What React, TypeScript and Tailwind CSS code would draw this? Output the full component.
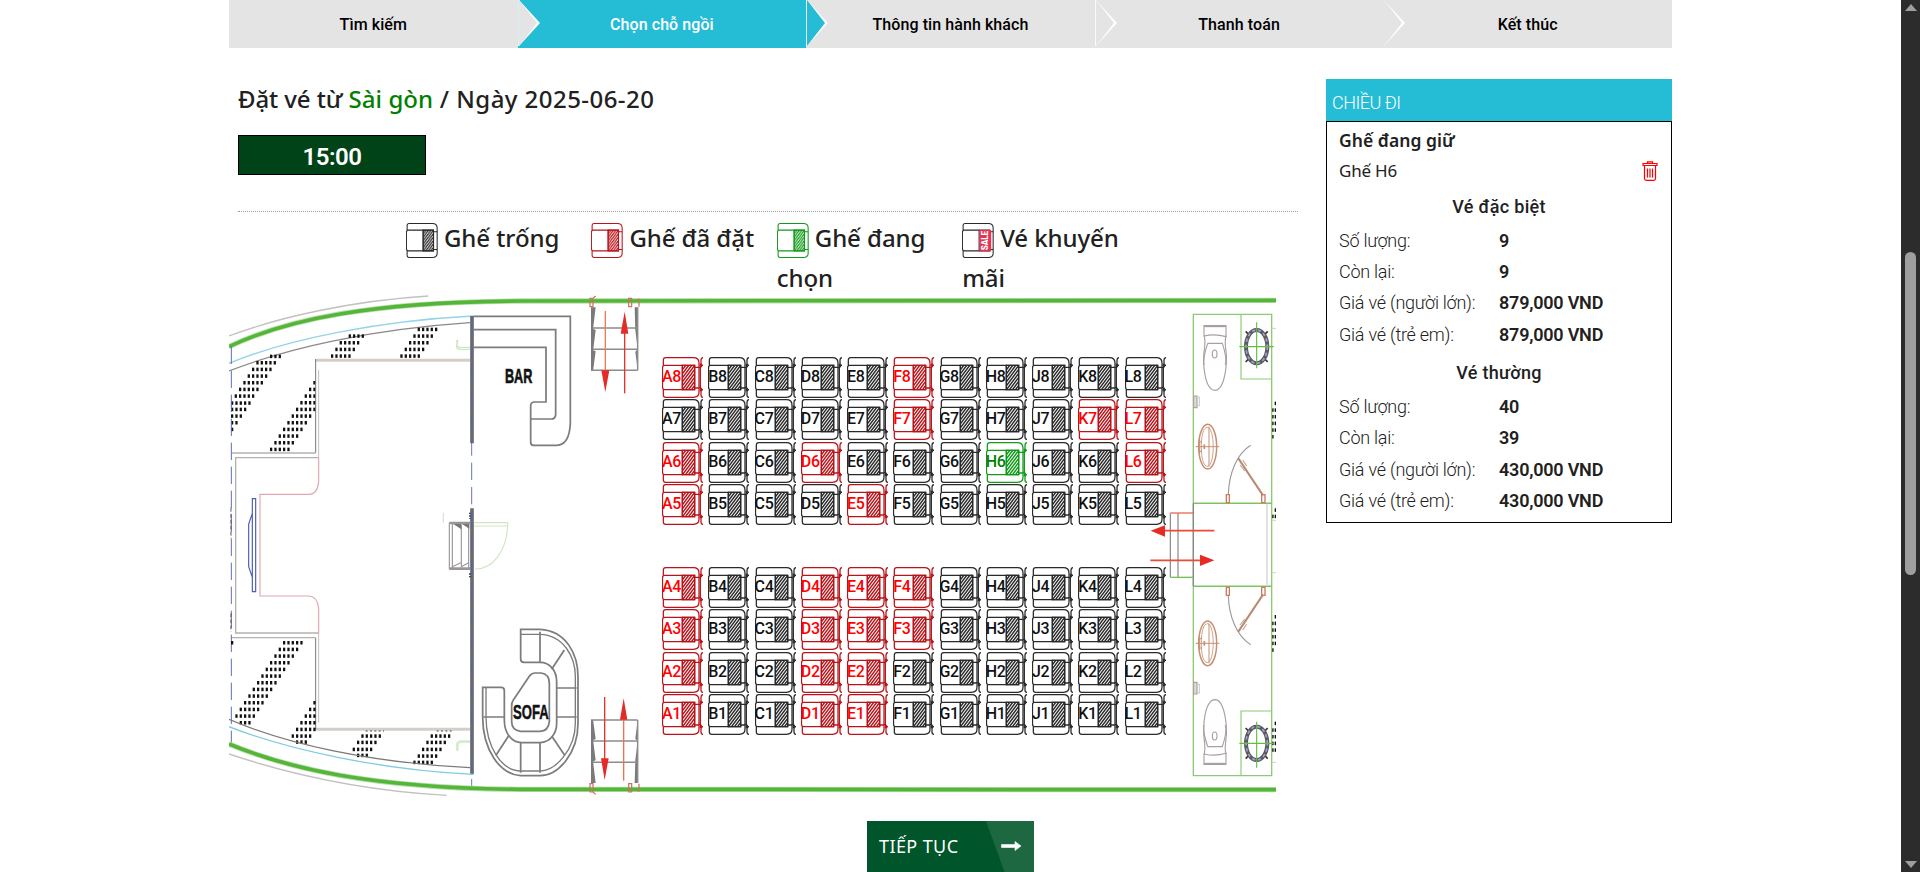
import React from "react";

const STEPS = ["Tìm kiếm", "Chọn chỗ ngồi", "Thông tin hành khách", "Thanh toán", "Kết thúc"];
const COLS = ["A", "B", "C", "D", "E", "F", "G", "H", "J", "K", "L"];
const BOOKED = new Set([
  "A8", "F8", "F7", "K7", "L7", "A6", "D6", "L6", "A5", "E5",
  "A4", "D4", "E4", "F4", "A3", "D3", "E3", "F3", "A2", "D2", "E2", "A1", "D1", "E1",
]);
const HELD = new Set(["H6"]);

type Kind = "free" | "booked" | "held" | "sale";
const LINE: Record<Kind, string> = { free: "#2a2a2a", booked: "#b8141a", held: "#109a18", sale: "#2a2a2a" };
const TEXT: Record<Kind, string> = {
  free: "text-[#111]",
  booked: "text-[#ff0000]",
  held: "text-[#008000]",
  sale: "text-[#111]",
};

function HatchDefs() {
  return (
    <svg className="absolute h-0 w-0" aria-hidden="true">
      <defs>
        {(["free", "booked", "held"] as Kind[]).map((k) => (
          <pattern key={k} id={`hatch-${k}`} width="9" height="12" patternUnits="userSpaceOnUse">
            <path d="M-2.25 15L11.25 -3M-2.25 3L2.25 -3M6.75 15L11.25 9" stroke={LINE[k]} strokeWidth="4.3" />
          </pattern>
        ))}
      </defs>
    </svg>
  );
}

function SeatIcon({ kind, legend = false }: { kind: Kind; legend?: boolean }) {
  const c = LINE[kind];
  return (
    <svg
      className={legend ? "inline-block h-[35px] w-8 align-middle" : "absolute inset-0 h-[41px] w-[41px]"}
      viewBox={legend ? "0 0 114 123" : "0 0 123 123"}
      preserveAspectRatio="none"
      fill="none"
      stroke={c}
      strokeWidth="3.8"
    >
      <path d="M4 25V9Q4 2 11 2H94Q111 2 111 18V106Q111 121 94 121H11Q4 121 4 114V98" fill="#fff" />
      <path d="M97 31H111M97 93H111" />
      <path d="M7 25Q1.5 25 1.5 33V90Q1.5 98 7 98H61V25Z" fill="#fff" />
      <path d="M61 25H98V98H61" />
      {kind === "sale" ? (
        <>
          <rect x="62" y="24" width="42" height="76" fill="#e5344f" stroke="none" />
          <text
            transform="rotate(-90 83 62)"
            x="83" y="73" textAnchor="middle" fill="#fff" stroke="none"
            fontSize="29" fontWeight="900" fontFamily="Roboto, sans-serif"
            textLength="68" lengthAdjust="spacingAndGlyphs"
          >
            SALE
          </text>
        </>
      ) : (
        <rect x="61" y="25" width="37" height="73" fill={`url(#hatch-${kind})`} />
      )}
      {!legend && (
        <path d="M115 20V103M123 2Q117 3 117 10V19Q117 25 123 25M123 98Q117 98 117 105V114Q117 121 123 121M111 32Q120 32 119 23M111 91Q120 91 119 100" />
      )}
    </svg>
  );
}

function Seat({ id }: { id: string }) {
  const kind: Kind = HELD.has(id) ? "held" : BOOKED.has(id) ? "booked" : "free";
  return (
    <button className="relative h-[41px] w-[41px] text-left">
      <SeatIcon kind={kind} />
      <span className={`absolute top-[8px] left-0 text-[16px] leading-6 font-medium tracking-[-0.3px] ${TEXT[kind]}`}>{id}</span>
    </button>
  );
}

function SeatBlock({ rows, className }: { rows: number[]; className: string }) {
  return (
    <div className={`absolute left-[433px] grid grid-cols-[repeat(11,46.25px)] auto-rows-[42.3px] ${className}`}>
      {rows.flatMap((r) => COLS.map((c) => <Seat key={c + r} id={c + r} />))}
    </div>
  );
}

/* [row y, first dot x, number of dots] */
type DotRow = [number, number, number];
const TOP_DOTS: DotRow[] = [
  [229, 153, 3], [248, 112, 5], [268, 99, 5], [288, 86, 5], [308, 73, 5], [328, 60, 5], [348, 47, 5],
  [369, 36, 5], [388, 36, 4], [408, 36, 3], [428, 36, 2], [448, 36, 1],
  [308, 283, 1], [328, 270, 2], [348, 257, 3], [368, 244, 4], [388, 231, 5], [408, 218, 5], [428, 205, 5],
  [448, 192, 5], [468, 179, 5], [488, 166, 5], [508, 153, 5],
  [168, 389, 4], [188, 362, 5], [208, 349, 5], [228, 336, 5],
  [148, 596, 5], [168, 583, 5], [188, 570, 5], [208, 557, 5], [228, 544, 5],
];
const BOTTOM_DOTS: DotRow[] = [
  [308, 36, 1], [308, 192, 5], [328, 179, 5], [348, 166, 5], [368, 153, 5], [388, 140, 5], [408, 127, 5],
  [428, 114, 5], [448, 101, 5], [468, 88, 5], [488, 75, 5], [508, 62, 5], [528, 49, 5], [548, 62, 3],
  [488, 283, 1], [508, 270, 2], [528, 257, 3], [548, 244, 4], [568, 231, 5], [588, 218, 5], [606, 231, 3],
  [588, 427, 5], [607, 414, 5], [628, 401, 5], [646, 414, 3],
  [588, 635, 5], [607, 622, 5], [628, 609, 5], [648, 596, 5], [667, 583, 5],
];
const SIDE_DOTS: DotRow[] = [
  [340, 527, 1], [360, 517, 2], [380, 517, 2], [400, 517, 2], [420, 517, 2], [440, 517, 1],
  [660, 527, 1], [679, 517, 2],
  [980, 527, 1], [1000, 517, 2], [1020, 517, 2], [1040, 517, 2], [1060, 517, 2], [1080, 517, 1],
  [1300, 527, 1], [1320, 517, 2], [1340, 517, 2], [1360, 517, 2], [1380, 517, 2],
];

function Dots({ rows, step = 13 }: { rows: DotRow[]; step?: number }) {
  return (
    <g fill="#111" stroke="none">
      {rows.flatMap(([y, x, n]) =>
        Array.from({ length: n }, (_, i) => (
          <rect key={`${y}-${x}-${i}`} x={x + i * step - 3} y={y - 5} width="6.8" height="10.5" />
        ))
      )}
    </g>
  );
}

function Restroom() {
  return (
    <g fill="none" strokeWidth="3.4">
      <g stroke="#a8a0a0">
        <path d="M312 107H378V140Q345 130 312 138Z" />
        <path d="M313 109H377" strokeWidth="5" />
        <path d="M313 138Q316 150 314 170C306 220 314 300 345 301C374 300 384 220 377 175Q374 150 378 138" />
        <path d="M323 160H367Q382 205 376 225M323 160Q308 205 312 225" />
        <ellipse cx="344" cy="192" rx="7" ry="12" />
        <path d="M281 318H291V353H281Z" fill="#ddd" />
        <path d="M291 321H298V347H291" stroke="#ccc" />
      </g>
      <g stroke="#c58f74">
        <ellipse cx="323" cy="470" rx="27" ry="67" strokeWidth="4.5" />
        <path d="M322 412C345 412 346 528 322 529C310 528 304 505 304 470S310 413 322 412Z" strokeWidth="2.5" />
        <path d="M287 470H358M327 410V530M296 456H306M296 484H306M299 450V490" strokeWidth="3" />
        <path d="M313 463V477" strokeWidth="5" />
      </g>
      <path d="M385 613C387 550 410 492 452 466" stroke="#999" />
      <path d="M415 505L489 616" stroke="#b88a70" strokeWidth="6" />
      <path d="M428 510L440 528M420 525L434 543" stroke="#c9a48f" />
      <path d="M379 614H388V638H379ZM485 614H495V638H485Z" stroke="#cc7a62" strokeWidth="4" />
      <path d="M423 73V267H515" stroke="#8ccb74" strokeWidth="3.5" />
      <path d="M437 124L450 138M503 124L490 138M437 216L450 202M503 216L490 202" stroke="#333" strokeWidth="5" />
      <ellipse cx="470" cy="170" rx="32" ry="50" stroke="#5a5a60" strokeWidth="12" />
      <ellipse cx="470" cy="170" rx="32" ry="50" stroke="#9aa3cc" strokeWidth="5" strokeDasharray="10 8" />
      <path d="M470 97V235M418 170H521" stroke="#62bb46" />
    </g>
  );
}

function Stairs() {
  return (
    <g>
      <path d="M453 82H467L460 140V147L467 150L460 206V211L467 214L460 266V271H453Z" fill="#7a7a7a" stroke="none" />
      <path d="M584 82H593V271L586 215L593 208L586 150Z" fill="#7a7a7a" stroke="none" />
      <path d="M458 144H593M458 208H593M453 271H593M593 82V271" stroke="#8c8c8c" strokeWidth="4.5" />
      <path d="M450 55H459V80H450ZM459 55L467 48M566 55H575V80H566ZM592 58H597V80" stroke="#c97358" strokeWidth="3.6" />
    </g>
  );
}

function DeckPlan() {
  return (
    <svg className="absolute inset-0 h-[506px] w-[1047px]" viewBox="229 290 1047 506" fill="none">
      <g transform="translate(220 280) scale(.33333)">
        <path d="M27 168C180 110 400 62 625 48" stroke="#c4c0c0" strokeWidth="4" />
        <path d="M27 200C200 118 450 66 900 63L3170 61" stroke="#b9e0aa" strokeWidth="16" />
        <path d="M27 200C200 118 450 66 900 63L3170 61" stroke="#55b53a" strokeWidth="11" />
        <path d="M27 250C200 178 480 122 760 108" stroke="#93d4e6" strokeWidth="4" />
        <path d="M27 273C200 205 450 148 750 128" stroke="#8d8888" strokeWidth="3.5" />
        <Dots rows={TOP_DOTS} />
        <path d="M287 241H750M287 1348H750" stroke="#d3cec9" strokeWidth="9" />
        <path d="M287 237V519M287 1073V1348" stroke="#777" strokeWidth="3" />
        <path d="M296 270V533M296 1059V1328" stroke="#c2bebe" strokeWidth="3" />
        <path d="M34 519H287M34 1073H287M296 533H47V1059H296" stroke="#b5b1b1" strokeWidth="4" />
        <path d="M296 533V605Q292 643 268 643H120V948H268Q292 950 296 985V1059" stroke="#e0a8ae" strokeWidth="3.5" />
        <path d="M97 656H107V935H97ZM97 700L86 732V860L97 892" stroke="#4c5db4" strokeWidth="3.5" />
        <path d="M34 200V1390" stroke="#5f6cb8" strokeWidth="3" strokeDasharray="52 20" />
        <path d="M33 683V775M33 1000V1055" stroke="#555" strokeWidth="3" strokeDasharray="12 6" />
        <path d="M756 108V490M756 685V1483" stroke="#6b6b6e" strokeWidth="11" />
        <path d="M755 110V1530" stroke="#5163b4" strokeWidth="2.6" strokeDasharray="52 21" />
        <path d="M708 183Q716 178 712 190Q704 208 722 208H750M712 185Q705 200 722 202H750" stroke="#cfe6c4" strokeWidth="4" />
        <path d="M712 1412V1395Q712 1385 724 1385H750" stroke="#d5eccb" strokeWidth="8" />
        <g stroke="#9a9696" strokeWidth="3.4">
          <path d="M688 728V868M697 728V868M724 735V862M746 738V868" />
          <path d="M688 729H750M688 866H750" strokeWidth="8" />
          <path d="M697 860L722 848M724 860L746 848" />
          <path d="M700 732H724V748ZM726 732H748V746Z" fill="#777" stroke="none" />
          <path d="M750 698V716M750 880V895" stroke="#444" strokeWidth="6" strokeDasharray="4 4" />
          <path d="M670 698V728" stroke="#ddd" />
        </g>
        <path d="M762 728H863V738H762M863 738C860 810 820 868 765 867" stroke="#cfe6c4" strokeWidth="3.5" />
      </g>
      <g transform="translate(220 540) scale(.33333)">
        <Dots rows={BOTTOM_DOTS} />
        <path d="M437 573H492M650 573H702" stroke="#444" strokeWidth="3" strokeDasharray="6 7" />
        <path d="M27 538C200 612 450 668 750 683" stroke="#7d7878" strokeWidth="3.5" />
        <path d="M27 560C200 628 480 690 760 703" stroke="#7fcbe0" strokeWidth="4" />
        <path d="M27 612C200 684 450 745 900 748L3170 749" stroke="#b9e0aa" strokeWidth="16" />
        <path d="M27 612C200 684 450 745 900 748L3170 749" stroke="#55b53a" strokeWidth="11" />
        <path d="M27 642C200 700 430 752 680 766" stroke="#c4c0c0" strokeWidth="4" />
      </g>
      <g transform="translate(440 280) scale(.33333)">
        <g stroke="#7c7c7c" strokeWidth="5.2">
          <path d="M100 109H391V430Q388 496 350 496H280Q272 496 272 486V378Q272 366 284 366H318V202H100" />
          <path d="M100 149H347V405Q345 417 335 417H272" />
        </g>
        <text x="195" y="310" fill="#111" stroke="#111" strokeWidth="2" fontSize="63" fontWeight="700" fontFamily="Liberation Sans, sans-serif" textLength="82" lengthAdjust="spacingAndGlyphs">BAR</text>
        <Stairs />
        <path d="M496 93V275" stroke="#f07a55" strokeWidth="4" />
        <path d="M554 150V340" stroke="#e8322a" strokeWidth="4" />
        <path d="M484 271H508L496 336ZM542 161H565L554 95Z" fill="#e42b26" />
      </g>
      <g transform="translate(440 600) scale(.33333)">
        <g stroke="#7c7c7c" strokeWidth="5.2">
          <path d="M242 88H300C380 92 414 165 414 230V370C414 460 355 527 300 527H242C180 523 128 450 128 350V262H183Q193 262 193 272V360C193 400 215 428 245 428H300C332 426 350 400 350 370V245C350 212 330 187 300 187H252Q242 187 242 177Z" />
          <path d="M242 103H300C370 105 406 170 406 230V370C406 450 345 513 300 513H242C185 513 138 440 138 350V264" strokeWidth="4" />
          <path d="M300 95V187M373 150L335 208M350 264H410M350 351H410M335 408L374 466M300 428V518M242 428V518M207 406L168 466M130 351H193" />
          <path d="M285 219H303Q328 222 328 250V365Q325 394 300 394H242Q215 390 215 365V320Q214 308 220 300L268 229Q275 219 285 219Z" />
        </g>
        <text x="219" y="356" fill="#111" stroke="#111" strokeWidth="1.5" fontSize="62" fontWeight="700" fontFamily="Liberation Sans, sans-serif" textLength="107" lengthAdjust="spacingAndGlyphs">SOFA</text>
        <g transform="translate(0 631) scale(1 -1)">
          <Stairs />
        </g>
        <path d="M494 291V478" stroke="#e8322a" strokeWidth="4" />
        <path d="M551 355V542" stroke="#f0724e" strokeWidth="4" />
        <path d="M483 475H506L494 540ZM540 359H562L551 295Z" fill="#e42b26" />
      </g>
      <g transform="translate(1100 290) scale(.33333)">
        <Dots rows={SIDE_DOTS} step={10} />
        <path d="M280 73H515V1457H280Z" stroke="#8ccb74" strokeWidth="4" />
        <path d="M280 640H515M280 889H515" stroke="#7cc462" strokeWidth="4.5" />
        <path d="M280 640V889" stroke="#888" strokeWidth="4" />
        <path d="M501 642V887" stroke="#d4d4d4" strokeWidth="4" />
        <path d="M515 115H528M515 1417H528" stroke="#ccc" strokeWidth="3" />
        <path d="M515 691H528M515 848H528" stroke="#bfe0b0" strokeWidth="3" />
        <path d="M211 669V862M234 669V862" stroke="#858585" strokeWidth="3.5" />
        <path d="M211 669H280" stroke="#ee6a50" strokeWidth="4" />
        <path d="M211 862H280" stroke="#75bf5c" strokeWidth="4" />
        <Restroom />
        <g transform="translate(0 1530) scale(1 -1)">
          <Restroom />
        </g>
        <path d="M343 722H190M151 811H305" stroke="#ee4a38" strokeWidth="5.5" />
        <path d="M152 722L195 706V740ZM343 811L300 794V828Z" fill="#e42b26" />
      </g>
    </svg>
  );
}

function StepBar() {
  return (
    <div className="flex h-12 w-[1443px]">
      {STEPS.map((s, i) => (
        <div
          key={s}
          className={`relative flex flex-1 items-center justify-center pt-px text-[16px] font-medium tracking-[0.08px] ${
            i === 1 ? "bg-[#25bcd5] text-white" : "bg-[#e4e4e4] text-black"
          }`}
        >
          {i > 0 && (
            <svg className="absolute top-0 left-0 h-[46px] w-[23px]" viewBox="0 0 23 46">
              {i < 4 && <path d="M.2 0H1.2V46H.2Z" fill="#fff" />}
              <path d="M1 0L22 23L1 46Z" fill="#fff" />
              <path d="M1 0L19 23L1 46Z" fill={i === 2 ? "#25bcd5" : "#e4e4e4"} />
            </svg>
          )}
          <span>{s}</span>
        </div>
      ))}
    </div>
  );
}

function LegendItem({ kind, children }: { kind: Kind; children: React.ReactNode }) {
  return (
    <div className="w-[185.4px] text-[24px] leading-10 font-medium tracking-[-0.08px] whitespace-nowrap">
      <SeatIcon kind={kind} legend />
      <span className="ml-[6px]">{children}</span>
    </div>
  );
}

function TicketGroup({ title, rows }: { title: string; rows: [string, string][] }) {
  return (
    <>
      <h4 className="h-[41px] pt-[9.7px] text-center font-medium tracking-[0.3px]">{title}</h4>
      {rows.map(([k, v]) => (
        <div key={k} className="flex h-[31.3px] items-center">
          <span className="w-[160px] font-light tracking-[-0.25px]">{k}</span>
          <span className="font-semibold tracking-[-0.22px]">{v}</span>
        </div>
      ))}
    </>
  );
}

function TrashIcon() {
  return (
    <svg className="h-5 w-4" viewBox="0 0 16 20" fill="none" stroke="#f00" strokeWidth="1.2">
      <path d="M1 2.5H15V4.5H1ZM5.500 2.500V.8H10.500V2.500M2.500 5V17.500Q2.500 19.300 4.300 19.300H11.700Q13.500 19.300 13.500 17.500V5M5.500 7.500V16.500M8 7.500V16.500M10.500 7.500V16.500" />
    </svg>
  );
}

export default function App() {
  return (
    <div className="flex h-[872px] w-full overflow-hidden bg-white font-['Roboto','Noto_Sans',sans-serif] text-[#212121]">
      <HatchDefs />
      <div className="flex-1 pl-[229px]">
        <StepBar />
        <div className="flex">
          <main className="w-[1097px] font-['Noto_Sans','Open_Sans',sans-serif]">
            <h1 className="ml-[9px] h-[70px] pt-[33px] text-[24px] leading-9 font-medium tracking-[0.25px] whitespace-nowrap">
              <span className="tracking-[-0.1px]">Đặt vé từ </span>
              <span className="tracking-[0.05px] text-[#008000]">Sài gòn</span>
              <span className="tracking-[0.45px]"> / Ngày 2025-06-20</span>
            </h1>
            <div className="mt-[17px] ml-[9px] flex h-10 w-[188px] items-center justify-center border border-black bg-[#004318] pt-[4px] font-['Roboto',sans-serif] text-[24px] font-semibold tracking-[-0.5px] text-white">
              15:00
            </div>
            <div className="mt-[36px] ml-[9px] w-[1060px] border-t border-dotted border-[#999]" />
            <div className="mt-[6px] flex h-[72px] pl-[177px]">
              <LegendItem kind="free">Ghế trống</LegendItem>
              <LegendItem kind="booked">Ghế đã đặt</LegendItem>
              <LegendItem kind="held">
                Ghế đang
                <br />
                chọn
              </LegendItem>
              <LegendItem kind="sale">
                Vé khuyến
                <br />
                mãi
              </LegendItem>
            </div>
            <div className="relative h-[506px] w-[1047px] font-['Roboto',sans-serif]">
              <DeckPlan />
              <SeatBlock rows={[8, 7, 6, 5]} className="top-[67px]" />
              <SeatBlock rows={[4, 3, 2, 1]} className="top-[277px]" />
            </div>
            <button className="relative mt-[25px] ml-[638px] flex h-[52px] w-[167px] items-center bg-[#00552b] pb-px pl-[12px] text-[18px] tracking-[0.4px] text-white">
              <svg className="absolute inset-0 h-[52px] w-[167px]" viewBox="0 0 167 52">
                <path d="M119 0H167V52H138Z" fill="#1d6840" />
                <path d="M134.500 23.500H148V20.500L154 25L148 29.500V26.500H134.500Z" fill="#fff" stroke="#fff" strokeWidth=".6" />
              </svg>
              <span className="relative">TIẾP TỤC</span>
            </button>
          </main>
          <aside className="mt-[31px] w-[346px] text-[18px]">
            <div className="h-[42px] bg-[#25bcd5] pt-[10px] pl-[6px] leading-[27px] font-light tracking-[-0.5px] text-white">CHIỀU ĐI</div>
            <div className="h-[402px] border border-black pt-[5px] pl-[12px] leading-[27px]">
              <div className="font-['Noto_Sans',sans-serif] text-[17.5px] font-semibold tracking-[0.05px]">Ghế đang giữ</div>
              <div className="mt-[3px] flex h-[26.6px] items-start justify-between pr-[13px]">
                <span className="font-['Noto_Sans',sans-serif] text-[17px] tracking-[-0.2px]">Ghế H6</span>
                <span className="mt-[4px]">
                  <TrashIcon />
                </span>
              </div>
              <div className="pr-[12px]">
                <TicketGroup
                  title="Vé đặc biệt"
                  rows={[["Số lượng:", "9"], ["Còn lại:", "9"], ["Giá vé (người lớn):", "879,000 VND"], ["Giá vé (trẻ em):", "879,000 VND"]]}
                />
                <TicketGroup
                  title="Vé thường"
                  rows={[["Số lượng:", "40"], ["Còn lại:", "39"], ["Giá vé (người lớn):", "430,000 VND"], ["Giá vé (trẻ em):", "430,000 VND"]]}
                />
              </div>
            </div>
          </aside>
        </div>
      </div>
      <div className="flex h-full w-[19px] flex-col items-center bg-[#2c2c2c]">
        <svg className="mt-[4px] h-2 w-3" viewBox="0 0 12 8">
          <path d="M6 0L12 7H0Z" fill="#9f9f9f" />
        </svg>
        <div className="mt-[240px] h-[323px] w-[11px] rounded-full bg-[#9f9f9f]" />
        <svg className="mt-auto mb-[4px] h-2 w-3" viewBox="0 0 12 8">
          <path d="M6 8L12 1H0Z" fill="#9f9f9f" />
        </svg>
      </div>
    </div>
  );
}
